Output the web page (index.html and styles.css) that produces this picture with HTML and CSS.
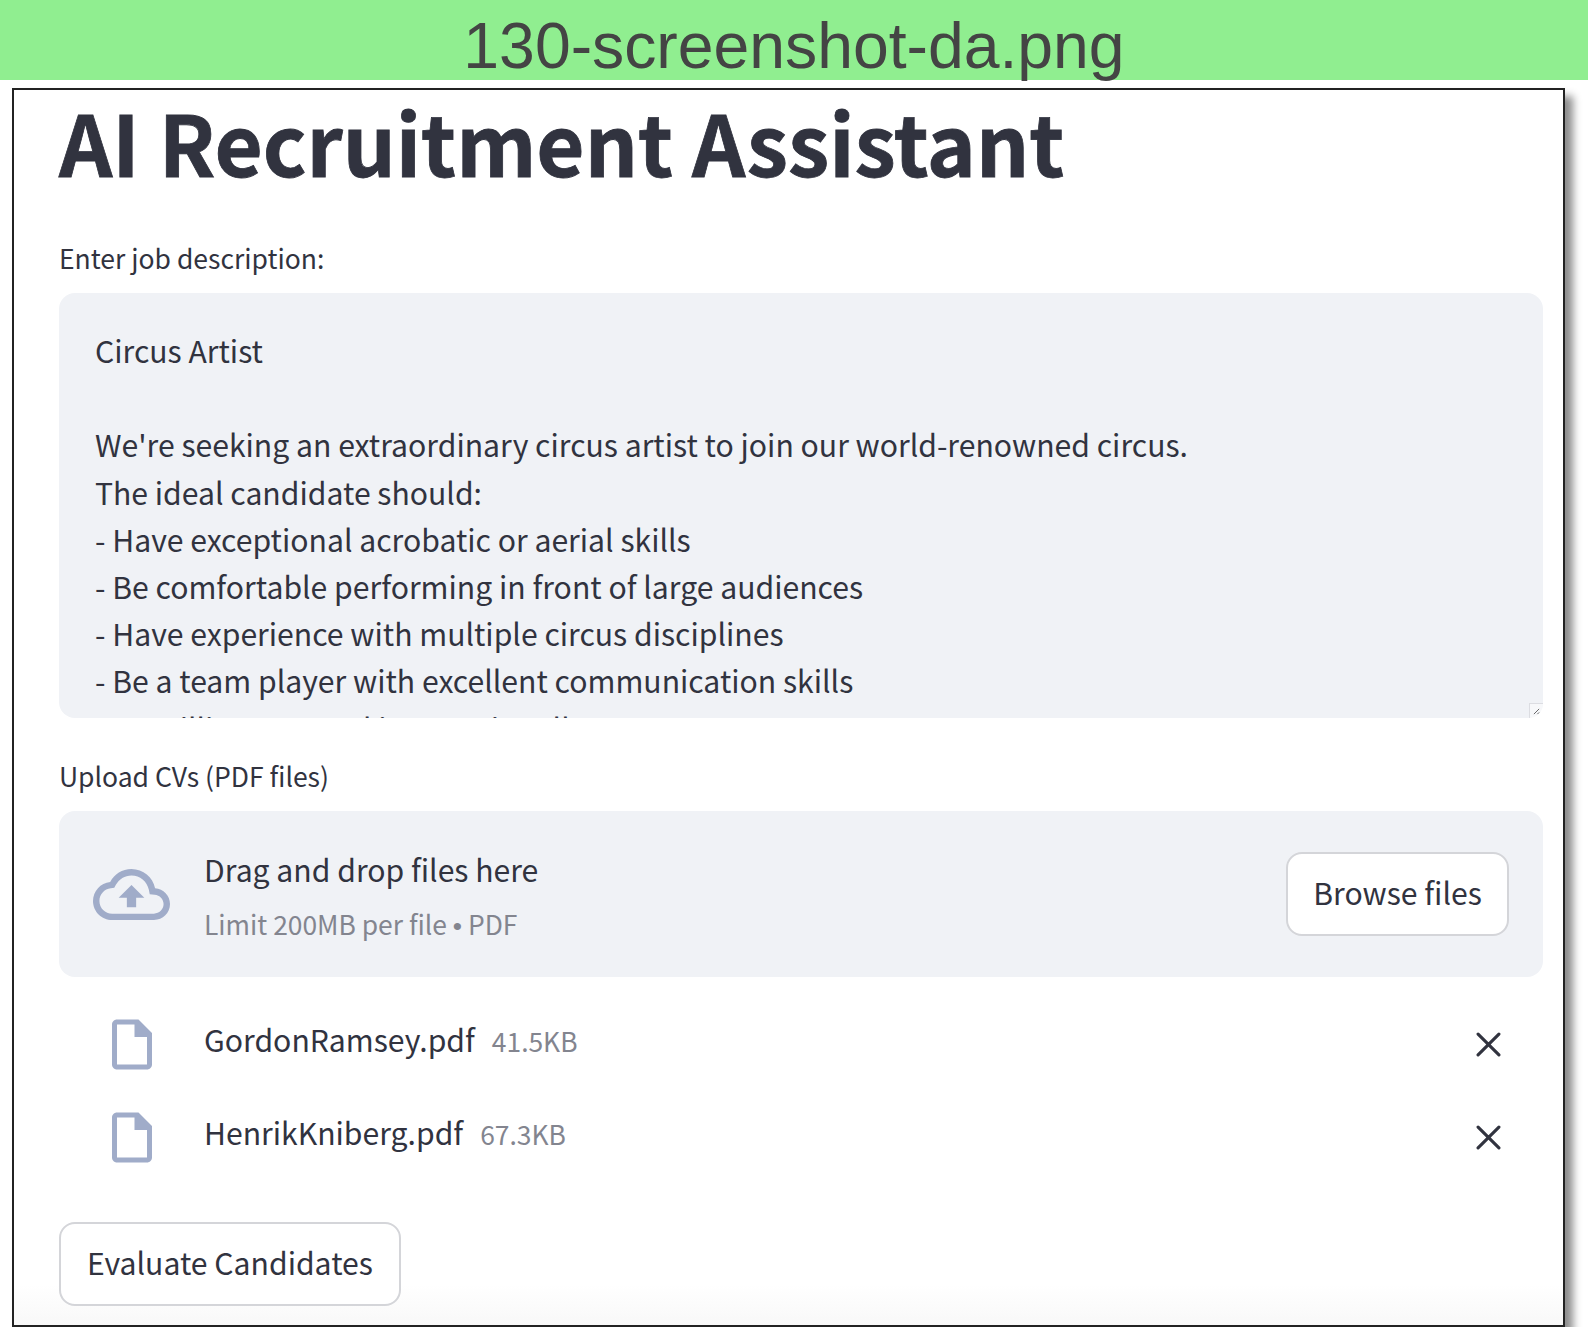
FILE: index.html
```html
<!DOCTYPE html>
<html>
  <head>
    <title>AI Recruitment Assistant</title>
    <link rel="stylesheet" href="styles.css">
  </head>
  <body>
    <div class="banner">130-screenshot-da.png</div>
    <div class="frame">
      <h1 class="title">AI Recruitment Assistant</h1>

      <label class="field_label" for="job">Enter job description:</label>
      <div class="job_box">
        <textarea class="job_text" id="job" readonly>Circus Artist

We're seeking an extraordinary circus artist to join our world-renowned circus.
The ideal candidate should:
- Have exceptional acrobatic or aerial skills
- Be comfortable performing in front of large audiences
- Have experience with multiple circus disciplines
- Be a team player with excellent communication skills
- Be willing to travel internationally</textarea>
        <span class="grip">
          <svg class="grip_mark" viewBox="0 0 8 8"><path d="M1 7l6-6M5 7l2-2" stroke="#555" stroke-width="1"/></svg>
        </span>
      </div>

      <div class="field_label upload_label">Upload CVs (PDF files)</div>
      <div class="dropzone">
        <svg class="cloud_icon" viewBox="0 4 24 16" preserveAspectRatio="none">
          <path fill="#a0acc9" d="M19.35 10.04C18.67 6.59 15.64 4 12 4 9.11 4 6.6 5.64 5.35 8.04 2.34 8.36 0 10.91 0 14c0 3.31 2.69 6 6 6h13c2.76 0 5-2.24 5-5 0-2.64-2.05-4.78-4.65-4.96zM19 18H6c-2.21 0-4-1.79-4-4 0-2.05 1.53-3.76 3.56-3.97l1.07-.11.5-.95C8.08 7.14 9.94 6 12 6c2.62 0 4.88 1.86 5.39 4.43l.3 1.5 1.53.11c1.56.1 2.78 1.41 2.78 2.96 0 1.65-1.35 3-3 3zM8 13h2.55v3h2.9v-3H16l-4-4z"/>
        </svg>
        <div class="drop_text">
          <div class="drop_title">Drag and drop files here</div>
          <div class="drop_limit">Limit 200MB per file <span class="dot">•</span> PDF</div>
        </div>
        <button class="btn browse_btn">Browse files</button>
      </div>

      <ul class="file_list">
        <li class="file_row">
          <svg class="doc_icon" viewBox="0 0 16 20"><path fill="#a0acc9" d="M2 0h8.6L16 5.4V18c0 1.1-.9 2-2 2H2c-1.1 0-2-.9-2-2V2C0 .9.9 0 2 0zm0 2v16h12V7H9V2H2z"/></svg>
          <div class="file_info">
            <span class="file_name">GordonRamsey.pdf</span>
            <span class="file_size">41.5KB</span>
          </div>
          <svg class="close_icon" viewBox="0 0 24 24"><path d="M2 2l20 20M22 2L2 22" stroke="#31333f" stroke-width="3" stroke-linecap="round"/></svg>
        </li>
        <li class="file_row">
          <svg class="doc_icon" viewBox="0 0 16 20"><path fill="#a0acc9" d="M2 0h8.6L16 5.4V18c0 1.1-.9 2-2 2H2c-1.1 0-2-.9-2-2V2C0 .9.9 0 2 0zm0 2v16h12V7H9V2H2z"/></svg>
          <div class="file_info">
            <span class="file_name">HenrikKniberg.pdf</span>
            <span class="file_size">67.3KB</span>
          </div>
          <svg class="close_icon" viewBox="0 0 24 24"><path d="M2 2l20 20M22 2L2 22" stroke="#31333f" stroke-width="3" stroke-linecap="round"/></svg>
        </li>
      </ul>

      <button class="btn eval_btn">Evaluate Candidates</button>
    </div>
  </body>
</html>
```

FILE: styles.css
```css
body {
    margin: 0;
    background: #fff;
    font-family: "Noto Sans CJK SC", "Noto Sans", sans-serif;
    color: #31333f;
}

.banner {
    box-sizing: border-box;
    height: 80px;
    padding-top: 12px;
    background: #90ee90;
    color: #444;
    font-family: "Liberation Sans", sans-serif;
    font-size: 64.3px;
    line-height: 68px;
    text-align: center;
}

.frame {
    box-sizing: border-box;
    height: 1239px;
    margin: 8px 23px 0 12px;
    padding: 0 20px 0 45px;
    border: 2px solid #222;
    background: linear-gradient(to top, #f8f8f8, #fff 40px);
    box-shadow: 8px 8px 8px rgba(0, 0, 0, 0.45);
}

.title {
    margin: 0;
    padding-top: 1px;
    font-size: 83.2px;
    font-weight: 700;
    line-height: 100px;
    -webkit-text-stroke: 0.8px #31333f;
}

.field_label {
    display: block;
    margin-top: 49px;
    font-size: 26.5px;
    line-height: 36px;
}

.job_box {
    position: relative;
    margin-top: 17px;
}

.job_text {
    display: block;
    box-sizing: border-box;
    width: 100%;
    height: 425px;
    padding: 34px 36px 0;
    border: 0;
    border-radius: 16px;
    background: #f0f2f6;
    color: #31333f;
    font-family: inherit;
    font-size: 30.17px;
    line-height: 47.2px;
    overflow: hidden;
    resize: none;
    outline: none;
}

.grip {
    position: absolute;
    right: 0;
    bottom: 0;
    box-sizing: border-box;
    width: 14px;
    height: 15px;
    border-top: 1px solid #dcdde2;
    border-left: 1px solid #dcdde2;
    border-bottom-right-radius: 14px;
    background: #f7f8fa;
}

.grip_mark {
    display: block;
    width: 7px;
    height: 7px;
    margin: 4px 0 0 3px;
}

.upload_label {
    margin-top: 40px;
}

.dropzone {
    display: flex;
    align-items: center;
    height: 166px;
    margin-top: 17px;
    padding: 0 34px;
    border-radius: 16px;
    background: #f0f2f6;
    box-sizing: border-box;
}

.cloud_icon {
    width: 77px;
    height: 51px;
    flex: none;
}

.drop_text {
    flex: 1;
    margin-left: 34px;
}

.drop_title {
    font-size: 30.17px;
    line-height: 48px;
}

.drop_limit {
    margin-top: 13px;
    font-size: 26.4px;
    line-height: 36px;
    color: #83858f;
}

.dot {
    font-family: "Liberation Sans", sans-serif;
}

.btn {
    box-sizing: border-box;
    border: 2px solid #d4d5d9;
    border-radius: 16px;
    background: #fff;
    color: #31333f;
    font-family: inherit;
    font-size: 30.17px;
}

.browse_btn {
    width: 223px;
    height: 84px;
    padding: 0 0 4px;
}

.file_list {
    margin: 0;
    padding: 21px 0 0 0;
    list-style: none;
}

.file_row {
    display: flex;
    align-items: center;
    height: 93px;
    padding-left: 53px;
}

.doc_icon {
    width: 40px;
    height: 51px;
    flex: none;
}

.file_info {
    display: flex;
    align-items: baseline;
    gap: 17px;
    margin-left: 52px;
    margin-bottom: 12px;
}

.file_name {
    font-size: 30.17px;
    line-height: 48px;
}

.file_size {
    font-size: 26.4px;
    color: #83858f;
}

.close_icon {
    width: 25px;
    height: 25px;
    margin-left: auto;
    margin-right: 42px;
}

.eval_btn {
    display: block;
    width: 342px;
    height: 84px;
    margin-top: 38px;
    padding: 0 0 4px;
}
```
